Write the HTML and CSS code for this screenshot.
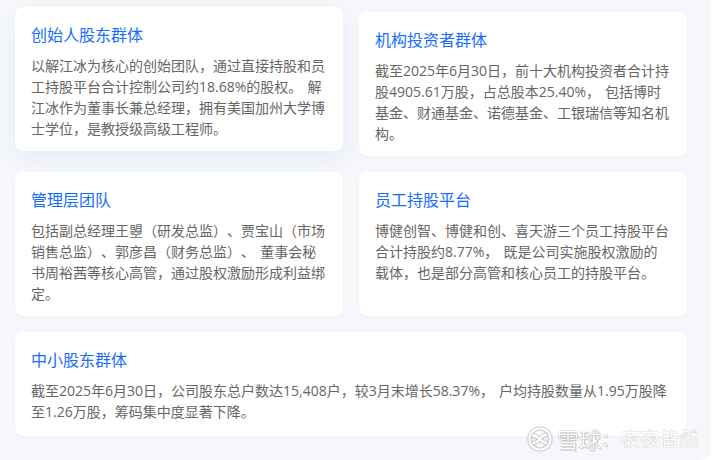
FILE: index.html
```html
<!DOCTYPE html>
<html lang="zh-CN">
<head>
<meta charset="utf-8">
<title>股东结构</title>
<link rel="stylesheet" href="styles.css">
</head>
<body>
<main class="panel">
  <div class="grid">
    <section class="card card-raised">
      <h3 class="card-title">创始人股东群体</h3>
      <p class="card-text">以解江冰为核心的创始团队，通过直接持股和员工持股平台合计控制公司约18.68%的股权。 解江冰作为董事长兼总经理，拥有美国加州大学博士学位，是教授级高级工程师。</p>
    </section>
    <section class="card">
      <h3 class="card-title">机构投资者群体</h3>
      <p class="card-text">截至2025年6月30日，前十大机构投资者合计持股4905.61万股，占总股本25.40%， 包括博时基金、财通基金、诺德基金、工银瑞信等知名机构。</p>
    </section>
    <section class="card">
      <h3 class="card-title">管理层团队</h3>
      <p class="card-text">包括副总经理王曌（研发总监）、贾宝山（市场销售总监）、郭彦昌（财务总监）、 董事会秘书周裕茜等核心高管，通过股权激励形成利益绑定。</p>
    </section>
    <section class="card">
      <h3 class="card-title">员工持股平台</h3>
      <p class="card-text">博健创智、博健和创、喜天游三个员工持股平台合计持股约8.77%， 既是公司实施股权激励的载体，也是部分高管和核心员工的持股平台。</p>
    </section>
    <section class="card card-wide">
      <h3 class="card-title">中小股东群体</h3>
      <p class="card-text">截至2025年6月30日，公司股东总户数达15,408户，较3月末增长58.37%， 户均持股数量从1.95万股降至1.26万股，筹码集中度显著下降。</p>
    </section>
  </div>
</main>
<div class="watermark">
  <svg class="watermark-logo" viewBox="0 0 24 24" width="24" height="24" aria-hidden="true">
    <circle cx="12" cy="12" r="10.500" fill="none" stroke="#fff" stroke-width="2.200"/>
    <path d="M5 8.500c3 0 4.500 1.500 6.500 3.500s3.500 4 7 4M11.500 12c1.500-2 3-4 6.500-4M5 16c2.500 0 4-1 5.500-2.500" fill="none" stroke="#fff" stroke-width="2.400" stroke-linecap="round"/>
  </svg>
  <span class="watermark-brand">雪球</span><span class="watermark-sep">：</span><span class="watermark-name">夜夜皆然</span>
</div>
</body>
</html>
```
FILE: styles.css
```css
* { box-sizing: border-box; }
html, body { margin: 0; padding: 0; background: #fff; }
body {
  position: relative;
  width: 720px;
  height: 460px;
  overflow: hidden;
  font-family: "Open Sans", "Noto Sans CJK SC", sans-serif;
  text-spacing-trim: space-all;
}
.panel {
  width: 711px;
  height: 460px;
  padding: 12px 24px 0 15px;
  background: #f5f7fb;
  border-bottom-right-radius: 12px;
}
.grid {
  display: grid;
  grid-template-columns: 328px 328px;
  grid-template-rows: 144px 144px 104px;
  gap: 16px;
}
.card {
  padding: 16px;
  background: #fff;
  border-radius: 8px;
  box-shadow: 0 1px 3px rgba(30, 60, 120, 0.04);
}
.card-raised {
  transform: translateY(-5px);
  box-shadow: 0 8px 20px rgba(40, 80, 180, 0.07);
}
.card-wide { grid-column: 1 / -1; }
.card-title {
  margin: 0 0 8px;
  font-size: 16px;
  line-height: 24px;
  font-weight: 400;
  color: #166dfa;
}
.card-text {
  margin: 0;
  font-size: 14px;
  line-height: 21px;
  color: #666;
  word-spacing: 1.5px;
}
.watermark {
  position: absolute;
  left: 528px;
  top: 427px;
  display: flex;
  align-items: center;
  color: #fff;
  text-shadow: 0 0 1px rgba(0, 0, 0, 0.5), 1px 1px 1px rgba(0, 0, 0, 0.15);
}
.watermark-logo {
  margin-right: 5px;
  filter: drop-shadow(0 0 1px rgba(0, 0, 0, 0.45));
}
.watermark-brand { font-size: 22px; line-height: 24px; }
.watermark-sep { width: 20px; font-size: 18px; line-height: 24px; }
.watermark-name { font-size: 19.500px; line-height: 24px; text-shadow: 0 0 1px rgba(0, 0, 0, 0.35); }
```
